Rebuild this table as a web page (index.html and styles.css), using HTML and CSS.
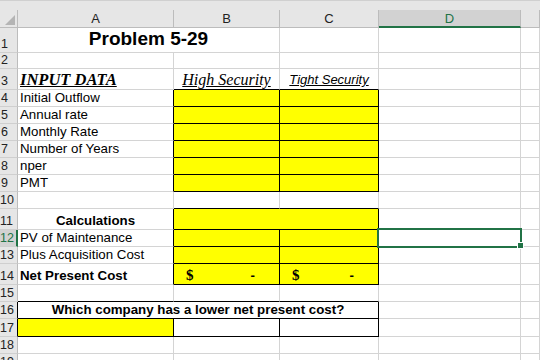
FILE: index.html
```html
<!DOCTYPE html>
<html lang="en">
<head>
<meta charset="UTF-8">
<title>Problem 5-29</title>
<link rel="stylesheet" href="styles.css">
</head>
<body>
    <div class="top-band"></div>

    <table class="sheet">
        <colgroup>
            <col class="c-hdr">
            <col class="c-a">
            <col class="c-b">
            <col class="c-c">
            <col class="c-d">
            <col class="c-e">
        </colgroup>
        <thead>
            <tr class="col-heads">
                <th class="corner"></th>
                <th>A</th>
                <th>B</th>
                <th>C</th>
                <th class="active-col">D</th>
                <th></th>
            </tr>
        </thead>
        <tbody>
            <tr class="h-title">
                <th>1</th>
                <td colspan="2" class="title">Problem 5-29</td>
                <td></td><td></td><td></td>
            </tr>
            <tr class="h-short">
                <th>2</th>
                <td></td><td></td><td></td><td></td><td></td>
            </tr>
            <tr class="h-tall">
                <th>3</th>
                <td class="input-head">INPUT DATA</td>
                <td class="kb col-head serif">High Security</td>
                <td class="kb col-head">Tight Security</td>
                <td></td><td></td>
            </tr>
            <tr>
                <th>4</th>
                <td class="kr">Initial Outflow</td>
                <td class="fill kr kb"></td><td class="fill kr kb"></td>
                <td></td><td></td>
            </tr>
            <tr>
                <th>5</th>
                <td class="kr">Annual rate</td>
                <td class="fill kr kb"></td><td class="fill kr kb"></td>
                <td></td><td></td>
            </tr>
            <tr>
                <th>6</th>
                <td class="kr">Monthly Rate</td>
                <td class="fill kr kb"></td><td class="fill kr kb"></td>
                <td></td><td></td>
            </tr>
            <tr>
                <th>7</th>
                <td class="kr">Number of Years</td>
                <td class="fill kr kb"></td><td class="fill kr kb"></td>
                <td></td><td></td>
            </tr>
            <tr>
                <th>8</th>
                <td class="kr">nper</td>
                <td class="fill kr kb"></td><td class="fill kr kb"></td>
                <td></td><td></td>
            </tr>
            <tr>
                <th>9</th>
                <td class="kr">PMT</td>
                <td class="fill kr kb"></td><td class="fill kr kb"></td>
                <td></td><td></td>
            </tr>
            <tr>
                <th>10</th>
                <td></td>
                <td class="kb"></td><td class="kb"></td>
                <td></td><td></td>
            </tr>
            <tr class="h-tall">
                <th>11</th>
                <td class="kr bold center">Calculations</td>
                <td colspan="2" class="fill kr kb"></td>
                <td></td><td></td>
            </tr>
            <tr>
                <th class="active-row">12</th>
                <td class="kr">PV of Maintenance</td>
                <td class="fill kr kb"></td><td class="fill kr kb"></td>
                <td class="selected"></td><td></td>
            </tr>
            <tr>
                <th>13</th>
                <td class="kr">Plus Acquisition Cost</td>
                <td class="fill kr kb"></td><td class="fill kr kb"></td>
                <td></td><td></td>
            </tr>
            <tr class="h-tall">
                <th>14</th>
                <td class="kr bold">Net Present Cost</td>
                <td class="fill kr kb"><div class="acct"><span class="cur">$</span><span>-</span></div></td>
                <td class="fill kr kb"><div class="acct"><span class="cur">$</span><span>-</span></div></td>
                <td></td><td></td>
            </tr>
            <tr>
                <th>15</th>
                <td class="kb"></td><td class="kb"></td><td class="kb"></td>
                <td></td><td></td>
            </tr>
            <tr>
                <th class="kr">16</th>
                <td colspan="3" class="kr kb bold center">Which company has a lower net present cost?</td>
                <td></td><td></td>
            </tr>
            <tr class="h-17">
                <th class="kr">17</th>
                <td class="fill kr kb"></td><td class="kr kb"></td><td class="kr kb"></td>
                <td></td><td></td>
            </tr>
            <tr>
                <th>18</th>
                <td></td><td></td><td></td><td></td><td></td>
            </tr>
            <tr>
                <th>19</th>
                <td></td><td></td><td></td><td></td><td></td>
            </tr>
        </tbody>
    </table>
</body>
</html>
```
FILE: styles.css
```css
html, body {
    margin: 0;
    padding: 0;
    overflow: hidden;
    background-color: #fff;
}
body {
    font-family: "Liberation Sans", Arial, sans-serif;
    color: #000;
}

.top-band {
    height: 10px;
    box-sizing: border-box;
    background-color: #e6e6e6;
    border-top: 1px solid #d0d0d0;
}

.sheet {
    width: 540px;
    table-layout: fixed;
    border-collapse: separate;
    border-spacing: 0;
}

/* column widths */
.c-hdr {width: 18px;}
.c-a {width: 156px;}
.c-b {width: 106px;}
.c-c {width: 99px;}
.c-d {width: 142px;}

/* row heights */
tr {height: 17px;}
.col-heads {height: 18px;}
.h-title {height: 25px;}
.h-short {height: 16px;}
.h-tall {height: 21px;}
.h-17 {height: 18px;}

/* headers */
th {
    padding: 0;
    font-weight: normal;
    font-size: 12.5px;
    line-height: 14px;
    color: #222;
    background-color: #e6e6e6;
    white-space: nowrap;
    overflow: visible;
}
thead th {
    border-right: 1px solid #bcbcbc;
    border-bottom: 1px solid #bcbcbc;
    text-align: center;
    vertical-align: middle;
    font-size: 13px;
    padding-top: 1px;
}
tbody th {
    text-align: center;
    vertical-align: bottom;
    padding: 0 8px 1px 0;
    border-right: 1px solid #bcbcbc;
    border-bottom: 1px solid #cfcfcf;
}
.corner {position: relative;}
.corner::after {
    content: "";
    position: absolute;
    right: 2px;
    bottom: 2px;
    border-style: solid;
    border-width: 0 0 10px 10px;
    border-color: transparent transparent #b4b4b4 transparent;
}
.active-col {
    background-color: #d2d2d2;
    color: #217346;
    border-bottom: 2px solid #217346 !important;
}
.active-row {
    background-color: #d2d2d2;
    color: #217346;
    border-right: 2px solid #217346 !important;
}

/* cells */
td {
    padding: 0 2px 1px 2px;
    font-size: 13.3px;
    line-height: 15px;
    vertical-align: bottom;
    white-space: nowrap;
    overflow: visible;
    border-right: 1px solid #d4d4d4;
    border-bottom: 1px solid #d4d4d4;
}
.kr {border-right-color: #000 !important;}
.kb {border-bottom-color: #000 !important;}
.fill {background-color: #ffff00;}
.bold {font-weight: bold;}
.center {text-align: center;}

.title {
    text-align: center;
    font-size: 19px;
    font-weight: bold;
    line-height: 22px;
    padding-bottom: 2px;
}
.input-head {
    font-family: "Liberation Serif", "Times New Roman", serif;
    font-size: 16.5px;
    font-weight: bold;
    font-style: italic;
    text-decoration: underline;
    padding-bottom: 2px;
}
.col-head {
    text-align: center;
    font-size: 13px;
    font-style: italic;
    text-decoration: underline;
    padding-bottom: 2px;
}
.col-head.serif {
    font-family: "Liberation Serif", "Times New Roman", serif;
    font-size: 16px;
}

/* accounting format: $ on the left, dash to the right */
.acct {
    display: flex;
    justify-content: space-between;
    align-items: baseline;
    padding: 0 22px 0 10px;
    font-weight: bold;
}
.cur {
    font-family: "Liberation Serif", "Times New Roman", serif;
    font-size: 15px;
}

/* active cell */
.selected {position: relative;}
.selected::before {
    content: "";
    position: absolute;
    left: -2px;
    top: -2px;
    right: -2px;
    bottom: -2px;
    border: 2px solid #217346;
}
.selected::after {
    content: "";
    position: absolute;
    right: -4px;
    bottom: -3px;
    width: 5px;
    height: 5px;
    background-color: #217346;
    border: 1px solid #fff;
}
```
